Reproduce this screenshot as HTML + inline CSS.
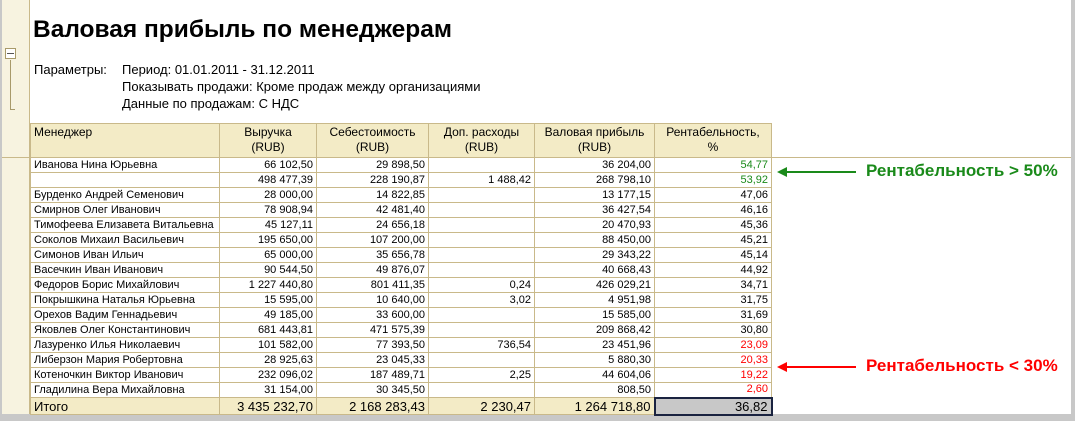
<!DOCTYPE html>
<html><head><meta charset="utf-8"><style>
*{margin:0;padding:0;box-sizing:border-box}
body{width:1075px;height:421px;background:#c8c8c8;position:relative;overflow:hidden;font-family:"Liberation Sans",Arial,sans-serif;color:#000}
#page{position:absolute;left:2px;top:0;width:1069px;height:414px;background:#fff;border-left:1px solid #a0a0a0}
#left{position:absolute;left:2px;top:0;width:28px;height:414px;background:#f7f3e0;border-right:1px solid #c9b98a}
.t{position:absolute;white-space:nowrap}
#hline{position:absolute;left:2px;top:157px;width:1069px;height:1px;background:#c9b98a}
table{position:absolute;left:30px;top:123px;border-collapse:collapse;font-size:11px}
td{border:1px solid #c9b98a;height:15px;padding:0 3px;text-align:right;line-height:13px}
td:first-child{text-align:left}
tr.h td{background:#f3ebc6;height:34px;vertical-align:top;text-align:center;font-size:12px;line-height:15px;padding-top:1px}
tr.h td:first-child{text-align:left}
tr.f td{background:#f3ebc6;height:17px;font-size:13px}
.g{color:#1a8a1a}.r{color:#f00}
</style></head><body>
<div id="page"></div>
<div id="left"></div>
<div class="t" style="left:5px;top:48px;width:11px;height:11px;border:1px solid #a89a6a;background:#fff"></div>
<div class="t" style="left:7px;top:53px;width:7px;height:1px;background:#555"></div>
<div class="t" style="left:10px;top:60px;width:1px;height:50px;background:#a89a6a"></div>
<div class="t" style="left:10px;top:109px;width:5px;height:1px;background:#a89a6a"></div>
<div class="t" style="left:33px;top:16px;font-size:24.5px;font-weight:bold">Валовая прибыль по менеджерам</div>
<div class="t" style="left:34px;top:61px;font-size:13px;line-height:17px">Параметры:</div>
<div class="t" style="left:122px;top:61px;font-size:13px;line-height:17px">Период: 01.01.2011 - 31.12.2011<br>Показывать продажи: Кроме продаж между организациями<br>Данные по продажам: С НДС</div>
<div id="hline"></div>
<table>
<colgroup><col style="width:189px"><col style="width:97px"><col style="width:112px"><col style="width:106px"><col style="width:120px"><col style="width:117px"></colgroup>
<tr class="h"><td>Менеджер</td><td>Выручка<br>(RUB)</td><td>Себестоимость<br>(RUB)</td><td>Доп. расходы<br>(RUB)</td><td>Валовая прибыль<br>(RUB)</td><td>Рентабельность,<br>%</td></tr>
<tr><td>Иванова Нина Юрьевна</td><td>66 102,50</td><td>29 898,50</td><td></td><td>36 204,00</td><td class="g">54,77</td></tr>
<tr><td></td><td>498 477,39</td><td>228 190,87</td><td>1 488,42</td><td>268 798,10</td><td class="g">53,92</td></tr>
<tr><td>Бурденко Андрей Семенович</td><td>28 000,00</td><td>14 822,85</td><td></td><td>13 177,15</td><td>47,06</td></tr>
<tr><td>Смирнов Олег Иванович</td><td>78 908,94</td><td>42 481,40</td><td></td><td>36 427,54</td><td>46,16</td></tr>
<tr><td>Тимофеева Елизавета Витальевна</td><td>45 127,11</td><td>24 656,18</td><td></td><td>20 470,93</td><td>45,36</td></tr>
<tr><td>Соколов Михаил Васильевич</td><td>195 650,00</td><td>107 200,00</td><td></td><td>88 450,00</td><td>45,21</td></tr>
<tr><td>Симонов Иван Ильич</td><td>65 000,00</td><td>35 656,78</td><td></td><td>29 343,22</td><td>45,14</td></tr>
<tr><td>Васечкин Иван Иванович</td><td>90 544,50</td><td>49 876,07</td><td></td><td>40 668,43</td><td>44,92</td></tr>
<tr><td>Федоров Борис Михайлович</td><td>1 227 440,80</td><td>801 411,35</td><td>0,24</td><td>426 029,21</td><td>34,71</td></tr>
<tr><td>Покрышкина Наталья Юрьевна</td><td>15 595,00</td><td>10 640,00</td><td>3,02</td><td>4 951,98</td><td>31,75</td></tr>
<tr><td>Орехов Вадим Геннадьевич</td><td>49 185,00</td><td>33 600,00</td><td></td><td>15 585,00</td><td>31,69</td></tr>
<tr><td>Яковлев Олег Константинович</td><td>681 443,81</td><td>471 575,39</td><td></td><td>209 868,42</td><td>30,80</td></tr>
<tr><td>Лазуренко Илья Николаевич</td><td>101 582,00</td><td>77 393,50</td><td>736,54</td><td>23 451,96</td><td class="r">23,09</td></tr>
<tr><td>Либерзон Мария Робертовна</td><td>28 925,63</td><td>23 045,33</td><td></td><td>5 880,30</td><td class="r">20,33</td></tr>
<tr><td>Котеночкин Виктор Иванович</td><td>232 096,02</td><td>187 489,71</td><td>2,25</td><td>44 604,06</td><td class="r">19,22</td></tr>
<tr><td>Гладилина Вера Михайловна</td><td>31 154,00</td><td>30 345,50</td><td></td><td>808,50</td><td class="r">2,60</td></tr>
<tr class="f"><td>Итого</td><td>3 435 232,70</td><td>2 168 283,43</td><td>2 230,47</td><td>1 264 718,80</td><td style="background:#c8c8c8;border:2px solid #1a2340">36,82</td></tr>
</table>
<svg class="t" style="left:776px;top:165px" width="80" height="14"><line x1="4" y1="7" x2="80" y2="7" stroke="#1a8a1a" stroke-width="2"/><path d="M1 7 L11 2 L11 12 Z" fill="#1a8a1a"/></svg>
<div class="t" style="left:866px;top:161px;font-size:17px;font-weight:bold;color:#1a8a1a">Рентабельность &gt; 50%</div>
<svg class="t" style="left:776px;top:360px" width="80" height="14"><line x1="4" y1="7" x2="80" y2="7" stroke="#f00" stroke-width="2"/><path d="M1 7 L11 2 L11 12 Z" fill="#f00"/></svg>
<div class="t r" style="left:866px;top:356px;font-size:17px;font-weight:bold">Рентабельность &lt; 30%</div>
</body></html>
